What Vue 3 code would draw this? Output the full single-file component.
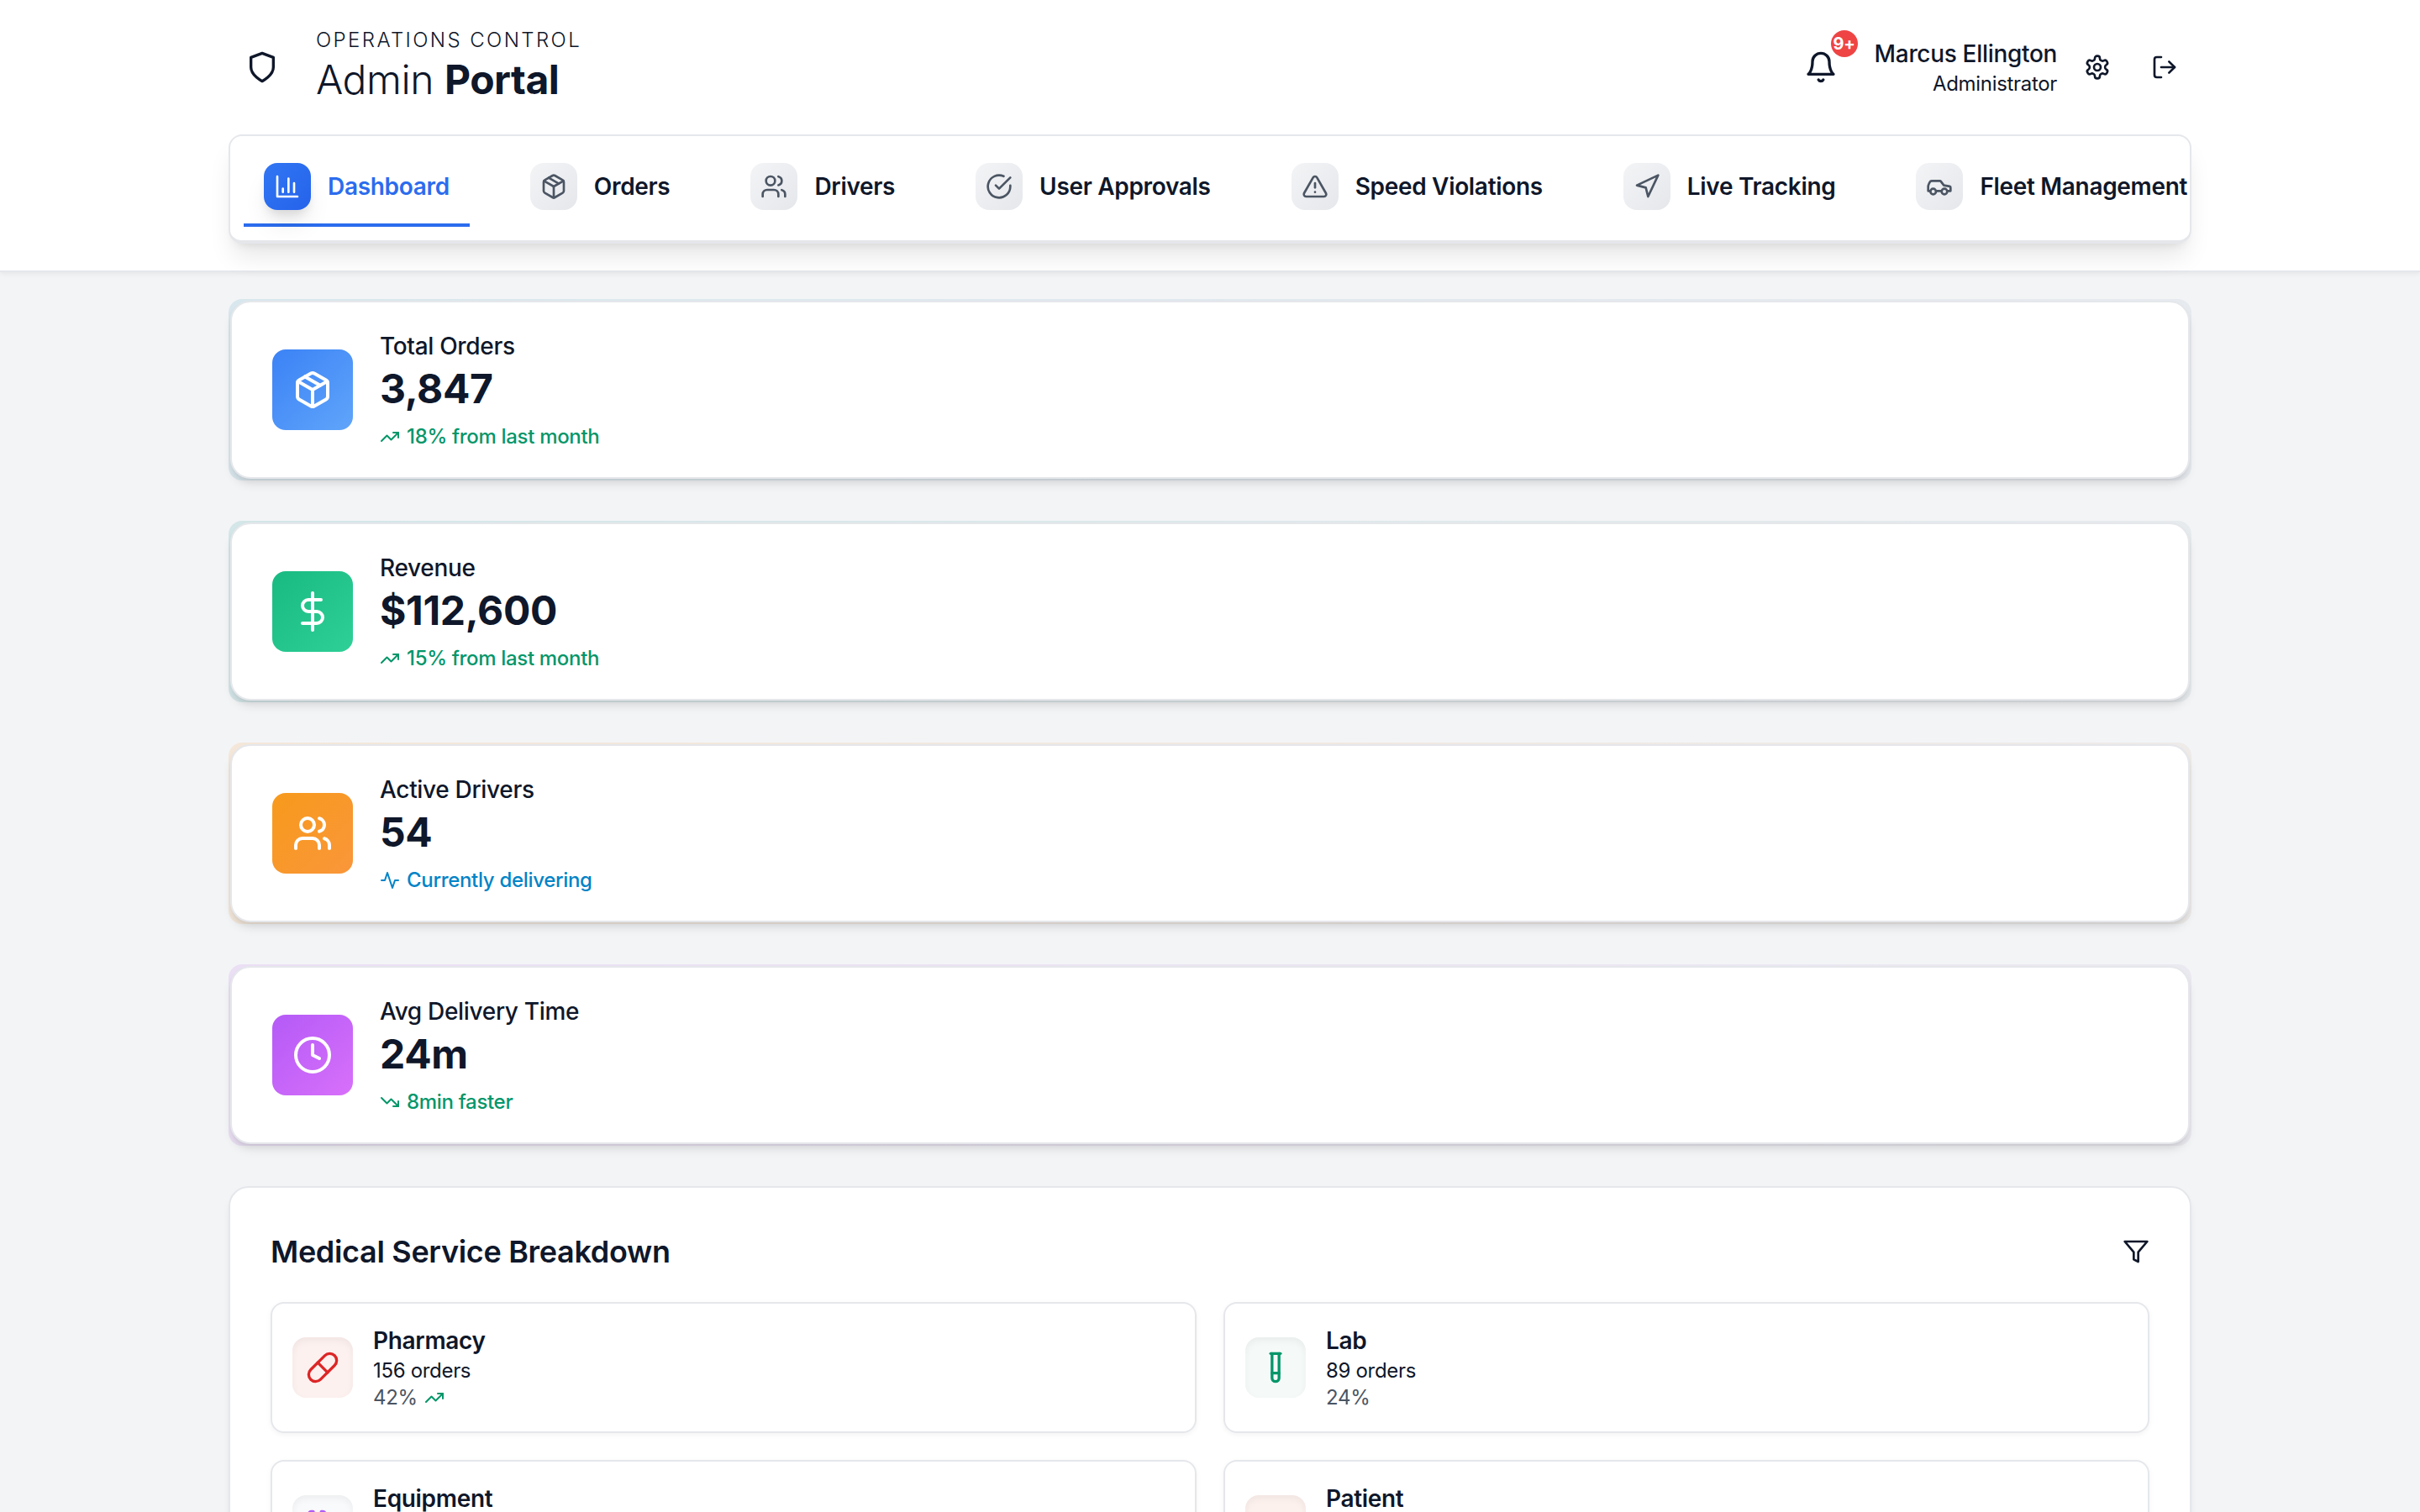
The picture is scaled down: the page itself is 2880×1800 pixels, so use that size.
<script setup>
const icons = {
  shield: ['M12 22s8-4 8-10V5l-8-3-8 3v7c0 6 8 10 8 10z'],
  bell: ['M6 8a6 6 0 0 1 12 0c0 7 3 9 3 9H3s3-2 3-9', 'M10.3 21a1.94 1.94 0 0 0 3.4 0'],
  settings: [
    'M12.22 2h-.44a2 2 0 0 0-2 2v.18a2 2 0 0 1-1 1.73l-.43.25a2 2 0 0 1-2 0l-.15-.08a2 2 0 0 0-2.73.73l-.22.38a2 2 0 0 0 .73 2.73l.15.1a2 2 0 0 1 1 1.72v.51a2 2 0 0 1-1 1.74l-.15.09a2 2 0 0 0-.73 2.73l.22.38a2 2 0 0 0 2.73.73l.15-.08a2 2 0 0 1 2 0l.43.25a2 2 0 0 1 1 1.73V20a2 2 0 0 0 2 2h.44a2 2 0 0 0 2-2v-.18a2 2 0 0 1 1-1.73l.43-.25a2 2 0 0 1 2 0l.15.08a2 2 0 0 0 2.73-.73l.22-.39a2 2 0 0 0-.73-2.73l-.15-.08a2 2 0 0 1-1-1.74v-.5a2 2 0 0 1 1-1.74l.15-.09a2 2 0 0 0 .73-2.73l-.22-.38a2 2 0 0 0-2.73-.73l-.15.08a2 2 0 0 1-2 0l-.43-.25a2 2 0 0 1-1-1.73V4a2 2 0 0 0-2-2z',
    'M15 12a3 3 0 1 1-6 0 3 3 0 0 1 6 0z',
  ],
  logout: ['M9 21H5a2 2 0 0 1-2-2V5a2 2 0 0 1 2-2h4', 'M16 17l5-5-5-5', 'M21 12H9'],
  chart: ['M3 3v18h18', 'M13 17V5', 'M18 17V9', 'M8 17v-3'],
  package: [
    'M16.5 9.4l-9-5.19',
    'M21 16V8a2 2 0 0 0-1-1.73l-7-4a2 2 0 0 0-2 0l-7 4A2 2 0 0 0 3 8v8a2 2 0 0 0 1 1.73l7 4a2 2 0 0 0 2 0l7-4A2 2 0 0 0 21 16z',
    'M3.3 7L12 12l8.7-5',
    'M12 22V12',
  ],
  users: [
    'M16 21v-2a4 4 0 0 0-4-4H6a4 4 0 0 0-4 4v2',
    'M13 7a4 4 0 1 1-8 0 4 4 0 0 1 8 0z',
    'M22 21v-2a4 4 0 0 0-3-3.87',
    'M16 3.13a4 4 0 0 1 0 7.75',
  ],
  check: ['M22 11.08V12a10 10 0 1 1-5.93-9.14', 'M9 11l3 3L22 4'],
  alert: ['M21.73 18l-8-14a2 2 0 0 0-3.48 0l-8 14A2 2 0 0 0 4 21h16a2 2 0 0 0 1.73-3z', 'M12 9v4', 'M12 17h.01'],
  navigation: ['M3 11l19-9-9 19-2-8-8-2z'],
  car: [
    'M14 16H9m10 0h3v-3.15a1 1 0 0 0-.84-.99L16 11l-2.7-3.6a1 1 0 0 0-.8-.4H5.24a2 2 0 0 0-1.8 1.1l-.8 1.63A6 6 0 0 0 2 12.42V16h2',
    'M9 16.5a2.5 2.5 0 1 1-5 0 2.5 2.5 0 0 1 5 0z',
    'M19 16.5a2.5 2.5 0 1 1-5 0 2.5 2.5 0 0 1 5 0z',
  ],
  dollar: ['M12 1v22', 'M17 5H9.5a3.5 3.5 0 0 0 0 7h5a3.5 3.5 0 0 1 0 7H6'],
  clock: ['M22 12a10 10 0 1 1-20 0 10 10 0 0 1 20 0z', 'M12 6v6l4 2'],
  up: ['M22 7l-8.5 8.5-5-5L2 17', 'M16 7h6v6'],
  down: ['M22 17l-8.5-8.5-5 5L2 7', 'M16 17h6v-6'],
  activity: ['M22 12h-4l-3 9L9 3l-3 9H2'],
  filter: ['M22 3H2l8 9.46V19l4 2v-8.54z'],
  pill: ['M10.5 20.5l10-10a4.95 4.95 0 1 0-7-7l-10 10a4.95 4.95 0 1 0 7 7z', 'M8.5 8.5l7 7'],
  tube: ['M14.5 2v17.5c0 1.4-1.1 2.5-2.5 2.5s-2.5-1.1-2.5-2.5V2', 'M8.5 2h7', 'M14.5 16h-5'],
  stethoscope: [
    'M4.8 2.3A.3.3 0 1 0 5 2H4a2 2 0 0 0-2 2v5a6 6 0 0 0 12 0V4a2 2 0 0 0-2-2h-1a.2.2 0 1 0 .3.3',
    'M8 15v1a6 6 0 0 0 12 0v-4',
    'M22 10a2 2 0 1 1-4 0 2 2 0 0 1 4 0z',
  ],
  truck: [
    'M5 18H3c-.6 0-1-.4-1-1V7c0-.6.4-1 1-1h10c.6 0 1 .4 1 1v11',
    'M14 9h4l4 4v4c0 .6-.4 1-1 1h-2',
    'M9 18a2 2 0 1 1-4 0 2 2 0 0 1 4 0z',
    'M19 18a2 2 0 1 1-4 0 2 2 0 0 1 4 0z',
  ],
}

const tabs = [
  { label: 'Dashboard', icon: 'chart', active: true },
  { label: 'Orders', icon: 'package' },
  { label: 'Drivers', icon: 'users' },
  { label: 'User Approvals', icon: 'check' },
  { label: 'Speed Violations', icon: 'alert' },
  { label: 'Live Tracking', icon: 'navigation' },
  { label: 'Fleet Management', icon: 'car' },
]

const stats = [
  { label: 'Total Orders', value: '3,847', note: '18% from last month', icon: 'package', trend: 'up', tone: 'blue' },
  { label: 'Revenue', value: '$112,600', note: '15% from last month', icon: 'dollar', trend: 'up', tone: 'green' },
  { label: 'Active Drivers', value: '54', note: 'Currently delivering', icon: 'users', trend: 'activity', tone: 'orange' },
  { label: 'Avg Delivery Time', value: '24m', note: '8min faster', icon: 'clock', trend: 'down', tone: 'purple' },
]

const services = [
  { name: 'Pharmacy', orders: '156 orders', share: '42%', rising: true, icon: 'pill', tone: 'red' },
  { name: 'Lab', orders: '89 orders', share: '24%', icon: 'tube', tone: 'green' },
  { name: 'Equipment', icon: 'stethoscope', tone: 'purple' },
  { name: 'Patient', icon: 'truck', tone: 'orange' },
]
</script>

<template>
  <div class="page">
    <header class="header">
      <div class="container">
        <div class="topbar">
          <div class="brand">
            <span class="brand-mark">
              <svg class="icon icon-lg" viewBox="0 0 24 24"><path v-for="d in icons.shield" :key="d" :d="d" /></svg>
            </span>
            <div>
              <p class="eyebrow">OPERATIONS CONTROL</p>
              <h1 class="title">Admin <strong>Portal</strong></h1>
            </div>
          </div>
          <div class="account">
            <button class="bell" type="button" aria-label="Notifications">
              <svg class="icon icon-lg" viewBox="0 0 24 24"><path v-for="d in icons.bell" :key="d" :d="d" /></svg>
              <span class="badge">9+</span>
            </button>
            <div class="user">
              <p class="user-name">Marcus Ellington</p>
              <p class="user-role">Administrator</p>
            </div>
            <div class="actions">
              <button class="action" type="button" aria-label="Settings">
                <svg class="icon icon-md" viewBox="0 0 24 24"><path v-for="d in icons.settings" :key="d" :d="d" /></svg>
              </button>
              <button class="action" type="button" aria-label="Log out">
                <svg class="icon icon-md" viewBox="0 0 24 24"><path v-for="d in icons.logout" :key="d" :d="d" /></svg>
              </button>
            </div>
          </div>
        </div>
        <nav class="tabs">
          <button v-for="tab in tabs" :key="tab.label" type="button" class="tab" :class="{ active: tab.active }">
            <span class="tab-icon">
              <svg class="icon icon-md" viewBox="0 0 24 24"><path v-for="d in icons[tab.icon]" :key="d" :d="d" /></svg>
            </span>
            {{ tab.label }}
          </button>
        </nav>
      </div>
    </header>

    <main class="container content">
      <article v-for="stat in stats" :key="stat.label" class="stat" :class="stat.tone">
        <div class="stat-inner">
          <span class="stat-icon">
            <svg class="icon icon-xl" viewBox="0 0 24 24"><path v-for="d in icons[stat.icon]" :key="d" :d="d" /></svg>
          </span>
          <div>
            <p class="stat-label">{{ stat.label }}</p>
            <p class="stat-value">{{ stat.value }}</p>
            <p class="stat-note" :class="{ live: stat.trend === 'activity' }">
              <svg class="icon icon-sm" viewBox="0 0 24 24"><path v-for="d in icons[stat.trend]" :key="d" :d="d" /></svg>
              {{ stat.note }}
            </p>
          </div>
        </div>
      </article>

      <section class="panel">
        <div class="panel-head">
          <h2>Medical Service Breakdown</h2>
          <button class="filter" type="button" aria-label="Filter services">
            <svg class="icon icon-md" viewBox="0 0 24 24"><path v-for="d in icons.filter" :key="d" :d="d" /></svg>
          </button>
        </div>
        <div class="services">
          <article v-for="service in services" :key="service.name" class="service" :class="service.tone">
            <span class="service-icon">
              <svg class="icon icon-lg" viewBox="0 0 24 24"><path v-for="d in icons[service.icon]" :key="d" :d="d" /></svg>
            </span>
            <div class="service-text">
              <h3>{{ service.name }}</h3>
              <p v-if="service.orders">{{ service.orders }}</p>
              <p v-if="service.share" class="share">
                {{ service.share }}
                <svg v-if="service.rising" class="icon icon-sm rising" viewBox="0 0 24 24"><path v-for="d in icons.up" :key="d" :d="d" /></svg>
              </p>
            </div>
          </article>
        </div>
      </section>
    </main>
  </div>
</template>

<style>
body {
  background: #f3f4f6;
  font-size: 32px;
  letter-spacing: -0.01em;
}
</style>

<style scoped>
.page {
  height: 100vh;
  overflow: hidden;
  background: #f3f4f6;
  color: #0f172a;
  font-family: Inter, "Liberation Sans", sans-serif;
  font-size: 24px;
  line-height: 32px;
}
.page * {
  box-sizing: border-box;
}
p,
h1,
h2,
h3 {
  margin: 0;
}
button {
  display: flex;
  align-items: center;
  justify-content: center;
  border: 0;
  padding: 0;
  background: none;
  color: inherit;
  font: inherit;
  letter-spacing: inherit;
  cursor: pointer;
}
.container {
  max-width: 2400px;
  margin: 0 auto;
  padding: 0 32px;
}
.icon {
  display: block;
  flex: none;
  fill: none;
  stroke: currentColor;
  stroke-width: 2;
  stroke-linecap: round;
  stroke-linejoin: round;
}
.icon-sm { width: 24px; height: 24px; }
.icon-md { width: 32px; height: 32px; }
.icon-lg { width: 40px; height: 40px; }
.icon-xl { width: 48px; height: 48px; }

.header {
  position: relative;
  padding: 32px 0;
  background: #fff;
  border-bottom: 2px solid #e5e7eb;
  box-shadow: 0 2px 6px rgba(0, 0, 0, 0.06);
}
.topbar,
.brand,
.account,
.actions {
  display: flex;
  align-items: center;
}
.topbar {
  justify-content: space-between;
  margin-bottom: 32px;
}
.brand,
.account {
  gap: 24px;
}
.brand-mark {
  display: flex;
  align-items: center;
  justify-content: center;
  width: 80px;
  height: 80px;
}
.eyebrow {
  font-weight: 300;
  line-height: 32px;
  letter-spacing: 0.1em;
}
.title {
  padding-bottom: 2px;
  font-size: 48px;
  font-weight: 300;
  line-height: 62px;
  letter-spacing: -0.01em;
}
.title strong {
  font-weight: 700;
}
.bell {
  position: relative;
  width: 80px;
  height: 80px;
}
.badge {
  position: absolute;
  top: -4px;
  right: -4px;
  width: 32px;
  height: 32px;
  border-radius: 50%;
  background: #ef4444;
  color: #fff;
  font-size: 20px;
  font-weight: 700;
  text-align: center;
}
.user {
  text-align: right;
}
.user-name {
  font-size: 28px;
  font-weight: 500;
  line-height: 40px;
}
.actions {
  gap: 16px;
  margin-left: -8px;
}
.action {
  width: 64px;
  height: 64px;
}

.tabs {
  display: flex;
  gap: 48px;
  padding: 16px;
  overflow: hidden;
  background: #fff;
  border: 2px solid #e5e7eb;
  border-bottom-width: 4px;
  border-radius: 16px;
  box-shadow: 0 20px 30px -6px rgba(0, 0, 0, 0.1), 0 8px 12px -8px rgba(0, 0, 0, 0.1);
}
.tab {
  flex: none;
  gap: 20px;
  padding: 16px 24px;
  border-bottom: 4px solid transparent;
  font-size: 28px;
  font-weight: 600;
  white-space: nowrap;
}
.tab-icon {
  display: flex;
  align-items: center;
  justify-content: center;
  width: 56px;
  height: 56px;
  border-radius: 16px;
  background: linear-gradient(135deg, #f3f4f6, #e5e7eb);
  color: #4b5563;
}
.tab.active {
  border-bottom-color: #2b6cee;
  color: #2b6cee;
}
.tab.active .tab-icon {
  background: linear-gradient(135deg, #3176f3, #2563eb);
  color: #fff;
  box-shadow: 0 20px 30px -6px rgba(0, 0, 0, 0.1), 0 8px 12px -4px rgba(0, 0, 0, 0.1);
}

.content {
  display: flex;
  flex-direction: column;
  gap: 48px;
  padding-top: 32px;
  padding-bottom: 48px;
}
.stat {
  padding: 2px;
  border-radius: 16px;
}
.stat.blue { background: linear-gradient(135deg, #d8e7ed, #e8ebf0); }
.stat.green { background: linear-gradient(135deg, #d3e6e8, #e8ebee); }
.stat.orange { background: linear-gradient(135deg, #f4e7d9, #edebea); }
.stat.purple { background: linear-gradient(135deg, #eadff4, #ebeaf0); }
.stat-inner {
  display: flex;
  align-items: center;
  gap: 32px;
  padding: 32px 48px;
  background: #fff;
  border: 2px solid #e5e7eb;
  border-radius: 24px;
  box-shadow: 0 8px 12px -2px rgba(0, 0, 0, 0.1), 0 4px 8px -4px rgba(0, 0, 0, 0.1);
}
.stat-icon {
  display: flex;
  align-items: center;
  justify-content: center;
  width: 96px;
  height: 96px;
  border-radius: 16px;
  color: #fff;
}
.blue .stat-icon { background: linear-gradient(135deg, #3b82f6, #60a5fa); }
.green .stat-icon { background: linear-gradient(135deg, #18ba82, #2fd097); }
.orange .stat-icon { background: linear-gradient(135deg, #f79a1c, #fa963a); }
.purple .stat-icon { background: linear-gradient(135deg, #b45af7, #d870fa); }
.stat-label {
  font-size: 28px;
  font-weight: 500;
  line-height: 40px;
}
.stat-value {
  margin-bottom: 10px;
  font-size: 48px;
  font-weight: 700;
  line-height: 62px;
}
.stat-note {
  display: flex;
  align-items: center;
  gap: 8px;
  color: #059669;
  font-weight: 500;
}
.stat-note.live {
  color: #0284c7;
}

.panel {
  padding: 48px;
  background: #fff;
  border: 2px solid #e5e7eb;
  border-radius: 24px;
  box-shadow: 0 8px 12px -2px rgba(0, 0, 0, 0.06), 0 4px 8px -4px rgba(0, 0, 0, 0.06);
}
.panel-head {
  display: flex;
  align-items: center;
  justify-content: space-between;
  margin-bottom: 32px;
}
.panel-head h2 {
  font-size: 36px;
  font-weight: 600;
  line-height: 56px;
}
.services {
  display: grid;
  grid-template-columns: 1fr 1fr;
  grid-auto-rows: 1fr;
  gap: 32px;
}
.service {
  display: flex;
  align-items: center;
  gap: 24px;
  padding: 24px;
  border: 2px solid #e5e7eb;
  border-radius: 16px;
  box-shadow: 0 2px 6px rgba(0, 0, 0, 0.05);
}
.service-icon {
  display: flex;
  align-items: center;
  justify-content: center;
  width: 72px;
  height: 72px;
  border-radius: 16px;
  box-shadow: inset 0 4px 8px rgba(0, 0, 0, 0.05);
}
.service.red .service-icon { background: #fdf1ef; color: #dc2626; }
.service.green .service-icon { background: #f5faf9; color: #059669; }
.service.purple .service-icon { background: #f9fafb; color: #b25df5; }
.service.orange .service-icon { background: #fdf1ee; color: #ea580c; }
.service-text {
  align-self: stretch;
}
.service h3 {
  font-size: 28px;
  font-weight: 600;
  line-height: 40px;
}
.share {
  display: flex;
  align-items: center;
  gap: 8px;
  color: #4b5563;
}
.rising {
  color: #059669;
}
</style>
